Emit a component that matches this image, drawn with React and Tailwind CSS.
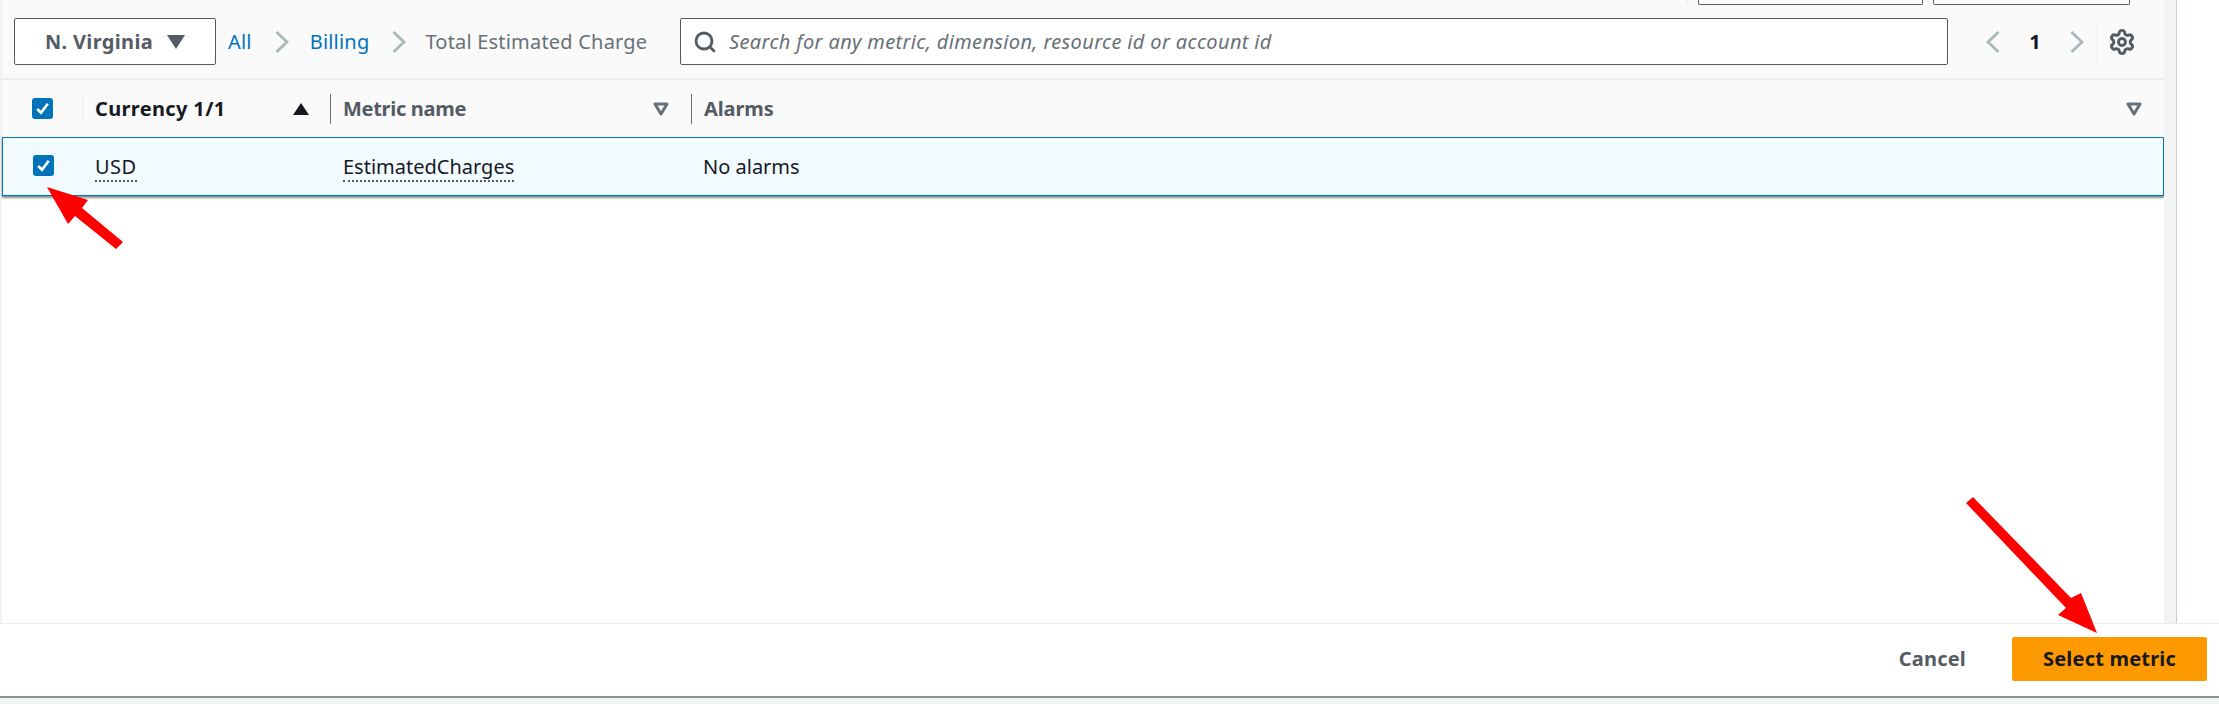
import React from "react";
import { Search, Settings } from "lucide-react";

const Check = () => (
  <span className="flex h-[21px] w-[21px] items-center justify-center rounded-[3px] bg-[#0073bb]">
    <svg width="15" height="15" viewBox="0 0 15 15" fill="none">
      <path d="M2.2 8 L6 11.8 L12.8 2.8" stroke="#fff" strokeWidth="2.7" />
    </svg>
  </span>
);

const Chevron = ({ left, h = 22, w = 14 }) => (
  <svg width={w} height={h} viewBox="0 0 14 22" fill="none">
    <path d={left ? "M12.5 1 L2 11 L12.5 21" : "M1.5 1 L12 11 L1.5 21"} stroke="#aab7b8" strokeWidth="2.8" />
  </svg>
);

const SortOutline = () => (
  <svg width="16" height="14" viewBox="0 0 16 14" fill="none">
    <path d="M2 2 H14 L8 12 Z" stroke="#687078" strokeWidth="3" strokeLinejoin="round" />
  </svg>
);

const Arrow = ({ className, points, box }) => (
  <svg className={className} width={box[0]} height={box[1]} viewBox={`0 0 ${box[0]} ${box[1]}`}>
    <polygon points={points} fill="#ff0000" />
  </svg>
);

export default function App() {
  return (
    <div className="relative flex h-[704px] w-[2219px] flex-col overflow-hidden bg-white font-['Noto_Sans',sans-serif]">
      <div className="flex h-[623px]">
        <div className="w-[2px] bg-[#f2f3f3]" />
        <div className="flex w-[2162px] flex-col">
          <div className="flex h-[5px] justify-end bg-[#fafafa] pr-[34px]">
            <div className="mr-[10px] h-[5px] w-px bg-[#eaeded]" />
            <div className="h-[5px] w-[225px] rounded-b-[2px] border-x border-b border-[#545b64] bg-white" />
            <div className="ml-[10px] h-[5px] w-[197px] rounded-b-[2px] border-x border-b border-[#545b64] bg-white" />
          </div>
          <div className="flex h-[73px] items-start bg-[#fafafa] pl-[12px] pt-[13px]">
            <div className="flex h-[47px] w-[202px] items-center justify-center gap-[14px] rounded-[2px] border border-[#545b64] bg-white text-[20px] font-bold tracking-[0.35px] text-[#545b64]">
              <span>N. Virginia</span>
              <svg width="18" height="14" viewBox="0 0 18 14"><path d="M0 0 H18 L9 14 Z" fill="#545b64" /></svg>
            </div>
            <div className="ml-[12px] flex h-[47px] w-[452px] items-center text-[20px] tracking-[0.2px]">
              <span className="text-[#0073bb]">All</span>
              <span className="ml-[23px] mr-[21px]"><Chevron /></span>
              <span className="text-[#0073bb]">Billing</span>
              <span className="ml-[23px] mr-[19px]"><Chevron /></span>
              <span className="text-[#687078]">Total Estimated Charge</span>
            </div>
            <div className="flex h-[47px] w-[1268px] items-center gap-[12px] rounded-[2px] border border-[#545b64] bg-white pl-[12px] text-[20px] italic tracking-[0.35px] text-[#687078]">
              <Search size={24} strokeWidth={2.8} color="#545b64" />
              <span>Search for any metric, dimension, resource id or account id</span>
            </div>
            <div className="flex h-[47px] items-center pl-[38px]">
              <Chevron left />
              <span className="w-[70px] text-center text-[20px] font-bold text-[#16191f]">1</span>
              <Chevron />
              <div className="ml-[13px] mr-[10px] h-[42px] w-px self-end bg-[#eaeded]" />
              <Settings size={28} strokeWidth={2.5} color="#545b64" />
            </div>
          </div>
          <div className="h-[2px] bg-[#eaeded]" />
          <div className="flex h-[57px] items-center bg-[#fafafa] text-[20px] font-bold">
            <div className="flex w-[80px] justify-end pr-[29px]"><Check /></div>
            <div className="flex h-[30px] w-[248px] items-center border-l border-[#eaeded] pl-[12px] tracking-[0.35px] text-[#16191f]">
              <span className="w-[198px]">Currency 1/1</span>
              <svg width="16" height="12" viewBox="0 0 16 12"><path d="M8 0 L16 12 H0 Z" fill="#16191f" /></svg>
            </div>
            <div className="flex h-[30px] w-[361px] items-center border-l border-[#687078] pl-[12px] tracking-[-0.3px] text-[#545b64]">
              <span className="w-[310px]">Metric name</span>
              <SortOutline />
            </div>
            <div className="flex h-[30px] flex-1 items-center justify-between border-l border-[#687078] pl-[12px] pr-[22px] tracking-[-0.1px] text-[#545b64]">
              <span>Alarms</span>
              <SortOutline />
            </div>
          </div>
          <div className="flex h-[59px] items-center border border-[#0073bb] bg-[#f1faff] text-[20px] text-[#16191f] shadow-[0_2px_2px_rgba(0,28,36,0.5)]">
            <div className="flex w-[80px] justify-end pr-[29px] pb-[2px]"><Check /></div>
            <div className="w-[247px] pl-[12px]">
              <span className="border-b-2 border-dotted border-[#545b64] tracking-[0.5px]">USD</span>
            </div>
            <div className="w-[360px] pl-[13px]">
              <span className="border-b-2 border-dotted border-[#545b64]">EstimatedCharges</span>
            </div>
            <div className="pl-[13px]">No alarms</div>
          </div>
        </div>
        <div className="w-[13px] border-r border-[#c5ced0] bg-[#f2f3f3]" />
      </div>
      <div className="flex h-[73px] items-center justify-end gap-[46px] border-t border-[#eaeded] bg-white pb-[2px] pr-[12px] text-[20px] font-bold tracking-[0.2px]">
        <span className="text-[#545b64]">Cancel</span>
        <div className="flex h-[44px] w-[195px] items-center justify-center rounded-[2px] bg-[#ff9900] text-[#16191f]">Select metric</div>
      </div>
      <div className="h-[2px] bg-[#879596]" />
      <div className="flex-1 bg-[#f2f3f3]" />
      <Arrow
        className="absolute left-[40px] top-[180px]"
        box={[90, 75]}
        points="7,7 48,20 42,28 83,62 76,69 35,36 28,44"
      />
      <Arrow
        className="absolute left-[1960px] top-[490px]"
        box={[140, 150]}
        points="13,7 111,108 121,103 137,143 98,125 106,118 6,13"
      />
    </div>
  );
}
